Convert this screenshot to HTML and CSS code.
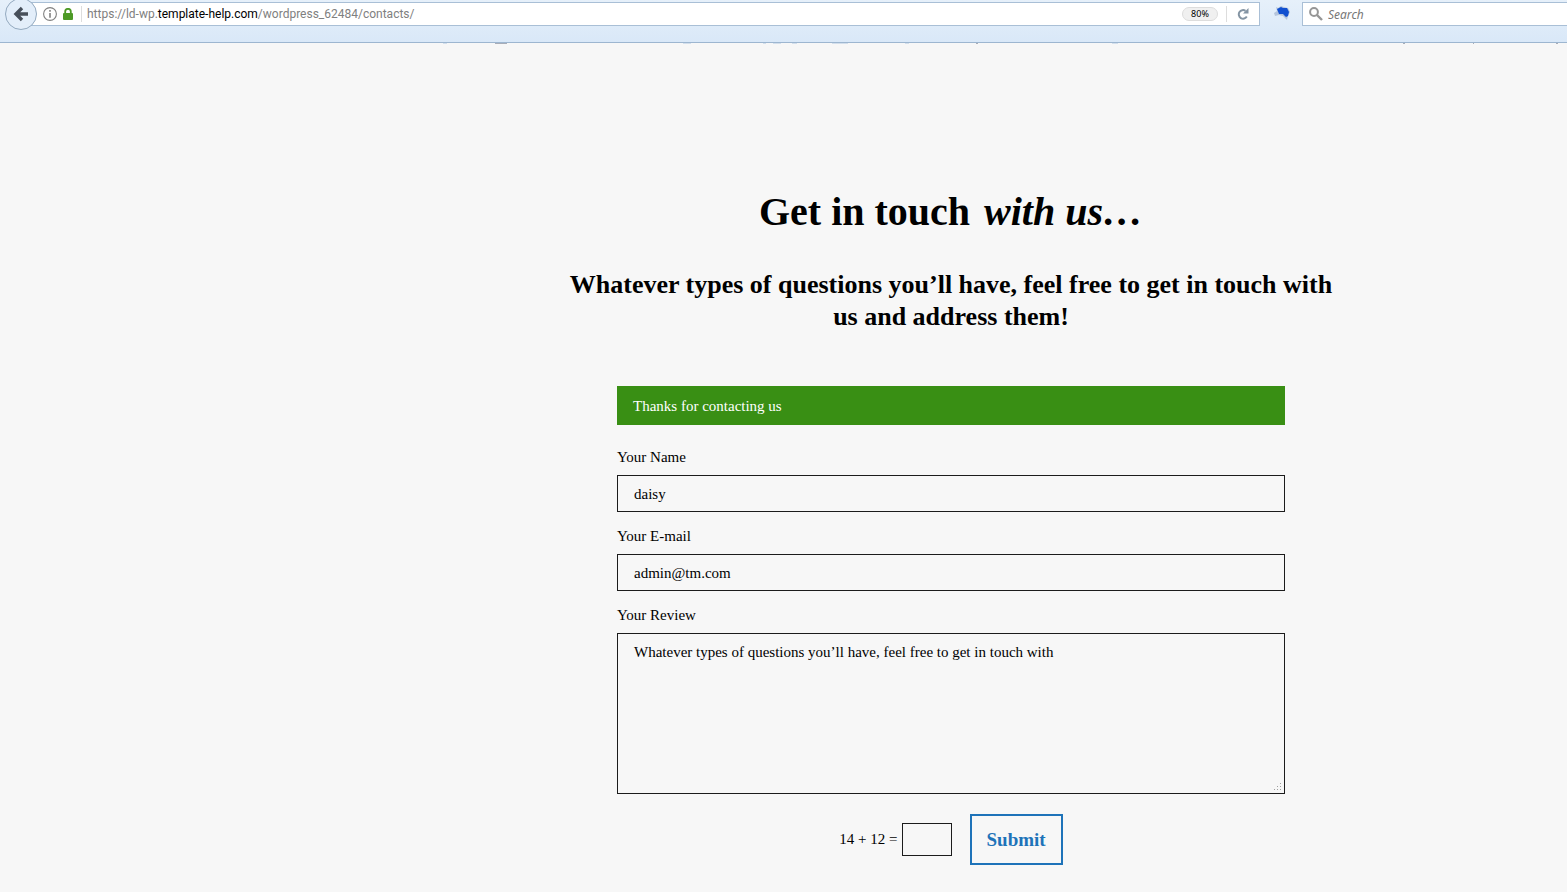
FILE: index.html
```html
<!DOCTYPE html>
<html lang="en">
<head>
<meta charset="utf-8">
<title>Contacts</title>
<link rel="stylesheet" href="styles.css">
</head>
<body>
<header class="toolbar">
  <button class="back" type="button" aria-label="Back">
    <svg width="32" height="32" viewBox="0 0 32 32"><circle cx="16" cy="16" r="15.500" fill="#e3eefa" stroke="#93a9bf"/><path d="M17 10 11 16 17 22M11.500 16H23" fill="none" stroke="#474f5a" stroke-width="3.400"/></svg>
  </button>
  <div class="address">
    <svg class="info" width="14" height="14" viewBox="0 0 14 14"><circle cx="7" cy="7" r="6.400" fill="none" stroke="#808080" stroke-width="1.100"/><path d="M7 6v4.800M7 3v1.800" stroke="#808080" stroke-width="1.600"/></svg>
    <svg class="lock" width="10" height="12" viewBox="0 0 10 12"><path d="M2.200 6V3.600a2.800 2.800 0 0 1 5.600 0V6" fill="none" stroke="#4d9a26" stroke-width="1.800"/><rect y="5" width="10" height="7" rx="1" fill="#4d9a26"/></svg>
    <span class="divider"></span>
    <a class="url" href="#contact">https://ld-wp.<span class="domain">template-help.com</span>/wordpress_62484/contacts/</a>
    <button class="zoom" type="button">80%</button>
    <span class="divider"></span>
    <button class="reload" type="button" aria-label="Reload"><svg width="12" height="12" viewBox="0 0 12 12"><path d="M8.500 2.800A4.300 4.300 0 1 0 9.800 8.600" fill="none" stroke="#8494a3" stroke-width="2"/><path d="M11.500 0v5.500H6z" fill="#8494a3"/></svg></button>
  </div>
  <button class="addon" type="button" aria-label="Add-on"><svg width="16" height="14" viewBox="0 0 16 14"><path d="M0 7 3 5 2 1l2 1 3-2 3 1 4 1 2 4-2 4-1 4-4-4-4-1-4 1z" fill="#b4c4dc"/><path d="M3 3l4-2 2 1 4 0 2 4-1 4-2 1-3-3-4 0z" fill="#1150d0"/></svg></button>
  <label class="search">
    <svg width="14" height="14" viewBox="0 0 14 14"><circle cx="5" cy="5" r="3.900" fill="none" stroke="#969696" stroke-width="2"/><path d="M8 8l5 5" stroke="#969696" stroke-width="2.400"/></svg>
    <input type="search" placeholder="Search" aria-label="Search">
  </label>
</header>
<svg class="edge" width="100%" height="1" aria-hidden="true"><path d="M443 .5h4M683 .5h8M763 .5h3M773 .5h8M792 .5h5M832 .5h16M905 .5h4M1112 .5h6" stroke="#d3dfec"/><path d="M495 .5h12M976 .5h2M1403 .5h2M1473 .5h1M1556 .5h2" stroke="#a8adb8"/></svg>
<main class="page" id="contact">
  <h1 class="title">Get in touch <em>with us…</em></h1>
  <h2 class="lead">Whatever types of questions you’ll have, feel free to get in touch with us and address them!</h2>
  <form class="form">
    <p class="notice" role="status">Thanks for contacting us</p>
    <label class="label" for="name">Your Name</label>
    <input class="field" id="name" type="text" value="daisy">
    <label class="label" for="email">Your E-mail</label>
    <input class="field" id="email" type="email" value="admin@tm.com">
    <label class="label" for="review">Your Review</label>
    <textarea class="field review" id="review">Whatever types of questions you’ll have, feel free to get in touch with</textarea>
    <div class="actions">
      <label for="sum">14 + 12 =</label>
      <input class="sum" id="sum" type="text">
      <button class="submit" type="submit">Submit</button>
    </div>
  </form>
</main>
</body>
</html>
```
FILE: styles.css
```css
* { box-sizing: border-box; }
body {
  margin: 0;
  background: #f7f7f7;
  color: #000;
  font-family: "Liberation Serif", "Times New Roman", serif;
}
button, input, textarea { font: inherit; color: inherit; }
.toolbar {
  display: flex;
  align-items: flex-start;
  height: 43px;
  padding-left: 5px;
  overflow: hidden;
  background: linear-gradient(#e6f0fa, #d9e8f8);
  border-bottom: 1px solid #9db6d0;
  font-family: "Noto Sans", sans-serif;
  font-size: 12px;
}
.toolbar button { border: 0; padding: 0; background: none; }
.toolbar svg { display: block; flex: none; }
.toolbar .back { z-index: 1; margin-top: -2px; }
.address, .search {
  display: flex;
  align-items: center;
  height: 24px;
  margin-top: 2px;
  background: #fff;
  border: 1px solid #a9bfd6;
}
.address { flex: 1; min-width: 0; margin-left: -8px; padding-left: 13px; }
.lock { margin-left: 6px; }
.divider { width: 1px; height: 16px; margin: 0 8px; background: #ddd; }
.url {
  flex: 1;
  min-width: 0;
  margin-left: -3px;
  color: #808080;
  font-family: Roboto, sans-serif;
  line-height: 16px;
  text-decoration: none;
  white-space: nowrap;
}
.domain { color: #000; }
.toolbar .zoom {
  width: 36px;
  height: 14px;
  border: 1px solid #ddd;
  border-radius: 7px;
  background: #f0f0f0;
  font-size: 9px;
  line-height: 12px;
}
.reload { margin: 0 10px 0 2px; }
.toolbar .addon { margin: 6px 12px 0 14px; }
.search { width: 265px; border-right: 0; padding-left: 6px; gap: 5px; }
.search input { flex: 1; min-width: 0; border: 0; padding: 0; background: none; outline: 0; }
.search input::placeholder { color: #777; font-style: italic; }
.edge { display: block; }
.page { padding: 142px 0 24px 335px; }
.title { margin: 0; font-size: 40px; line-height: 52px; text-align: center; }
.title em { margin-left: 4px; }
.lead {
  max-width: 780px;
  margin: 31px auto 53px;
  font-size: 26px;
  line-height: 32px;
  text-align: center;
}
.form { max-width: 668px; margin: 0 auto; font-size: 15px; }
.notice { margin: 0 0 22px; padding: 11px 16px 9px; background: #398f14; color: #fff; line-height: 19px; }
.label { display: block; margin-bottom: 8px; line-height: 20px; }
.field {
  display: block;
  width: 100%;
  height: 37px;
  margin: 0 0 14px;
  padding: 2px 16px 0;
  border: 1px solid #1c1c1c;
  border-radius: 0;
  background: transparent;
}
.review { height: 161px; margin-bottom: 20px; padding: 9px 16px; line-height: 19px; resize: vertical; }
.review::-webkit-resizer {
  --dot: linear-gradient(#a0a0a0, #a0a0a0);
  background:
    var(--dot) 11px 5px / 1px 1px,
    var(--dot) 8px 8px / 1px 1px,
    var(--dot) 11px 8px / 1px 1px,
    var(--dot) 5px 11px / 1px 1px,
    var(--dot) 8px 11px / 1px 1px,
    var(--dot) 11px 11px / 1px 1px;
  background-repeat: no-repeat;
}
.actions { display: flex; align-items: center; justify-content: center; }
.sum { width: 50px; height: 33px; margin: 0 18px 0 4px; border: 1px solid #1c1c1c; background: transparent; }
.submit {
  height: 51px;
  padding: 0 15px;
  border: 2px solid #1e73b9;
  background: transparent;
  color: #1e73b9;
  font-size: 19px;
  font-weight: bold;
}
```
